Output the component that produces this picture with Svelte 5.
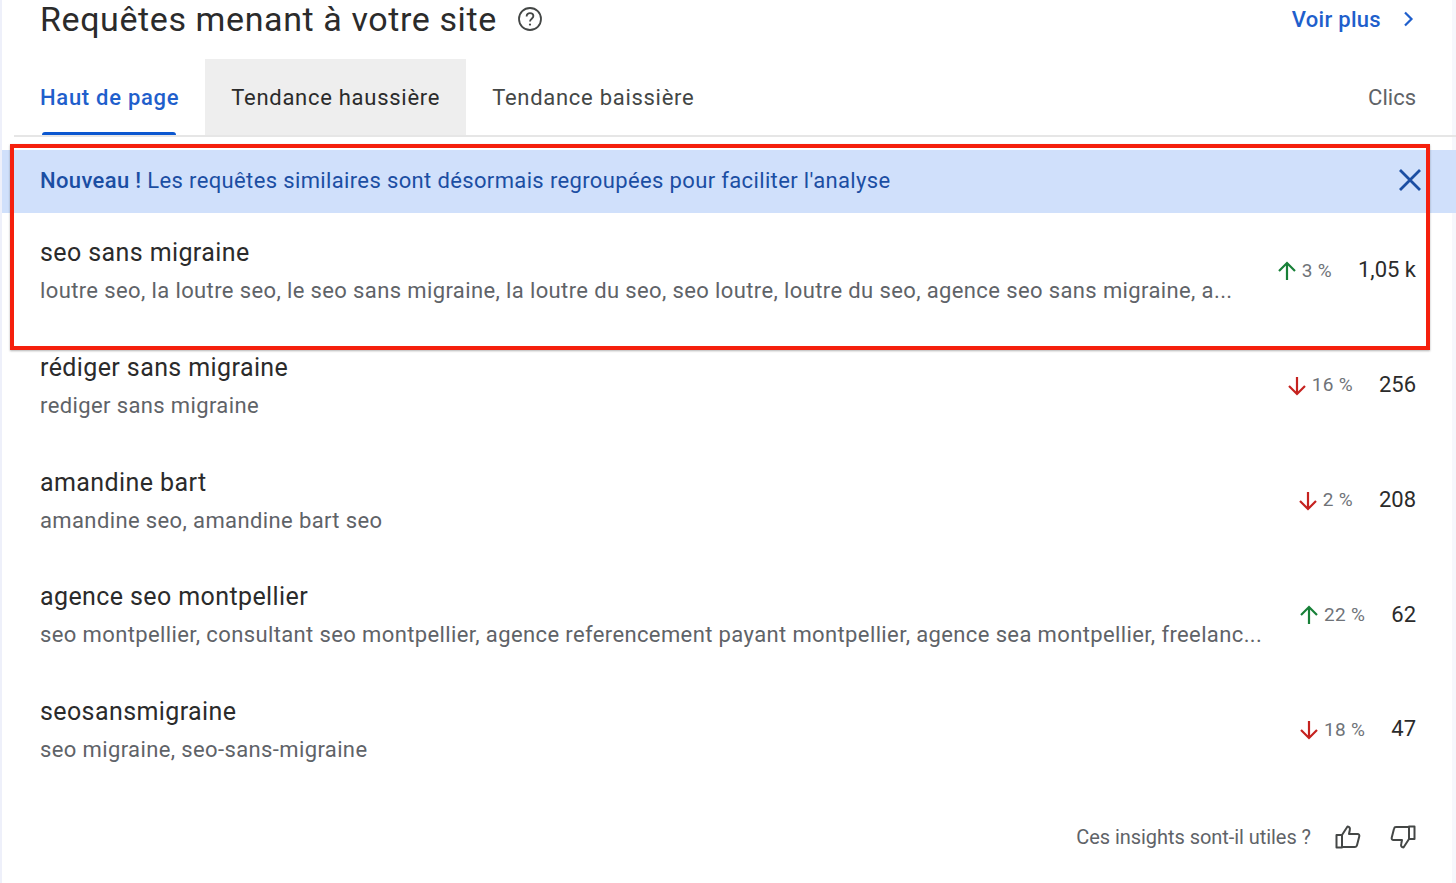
<script>
  const rows = [
    { title: "seo sans migraine", sub: "loutre seo, la loutre seo, le seo sans migraine, la loutre du seo, seo loutre, loutre du seo, agence seo sans migraine, a...", dir: "up", pct: "3 %", clicks: "1,05 k" },
    { title: "rédiger sans migraine", sub: "rediger sans migraine", dir: "down", pct: "16 %", clicks: "256" },
    { title: "amandine bart", sub: "amandine seo, amandine bart seo", dir: "down", pct: "2 %", clicks: "208" },
    { title: "agence seo montpellier", sub: "seo montpellier, consultant seo montpellier, agence referencement payant montpellier, agence sea montpellier, freelanc...", dir: "up", pct: "22 %", clicks: "62" },
    { title: "seosansmigraine", sub: "seo migraine, seo-sans-migraine", dir: "down", pct: "18 %", clicks: "47" },
  ]
</script>

<div class="card">
  <header class="head">
    <div class="head-left">
      <h1>Requêtes menant à votre site</h1>
      <svg class="help" viewBox="0 0 26 26" width="26" height="26" fill="none" stroke="#444746">
        <circle cx="13" cy="13" r="11" stroke-width="1.8" />
        <path d="M9.6 10.4c0-2 1.5-3.3 3.4-3.3s3.4 1.2 3.4 3c0 2.500-3.400 2.700-3.400 5.400" stroke-width="1.8" />
        <circle cx="13" cy="18.600" r="1.100" fill="#444746" stroke="none" />
      </svg>
    </div>
    <a class="more" href="#more">
      Voir plus
      <svg viewBox="0 0 12 16" width="12" height="16" fill="none" stroke="#1f5fcc" stroke-width="2.200"><path d="M2 1.500l6.500 6.500L2 14.500" /></svg>
    </a>
  </header>

  <nav class="tabs">
    <span class="tab active">Haut de page</span>
    <span class="tab hover">Tendance haussière</span>
    <span class="tab">Tendance baissière</span>
    <span class="metric">Clics</span>
  </nav>

  <div class="banner">
    <p><b>Nouveau !</b> Les requêtes similaires sont désormais regroupées pour faciliter l'analyse</p>
    <svg viewBox="0 0 24 24" width="24" height="24" fill="none" stroke="#1b4ea3" stroke-width="2.800"><path d="M2 2l20 20M22 2L2 22" /></svg>
  </div>

  <ul class="rows">
    {#each rows as row}
      <li class="row">
        <div class="text">
          <div class="title">{row.title}</div>
          <div class="sub">{row.sub}</div>
        </div>
        <div class="trend">
          <svg class={row.dir} viewBox="0 0 20 20" width="20" height="20" fill="none" stroke="currentColor" stroke-width="2.200">
            {#if row.dir === "up"}
              <path d="M10 19V2M2 10l8-8 8 8" />
            {:else}
              <path d="M10 1v17M2 10l8 8 8-8" />
            {/if}
          </svg>
          <span class="pct">{row.pct}</span>
        </div>
        <div class="clicks">{row.clicks}</div>
      </li>
    {/each}
  </ul>

  <footer class="foot">
    <span>Ces insights sont-il utiles ?</span>
    <svg viewBox="0 0 26 24" width="26" height="24" fill="none" stroke="#444746" stroke-width="2" stroke-linejoin="round">
      <path d="M1.500 10h5.500v12.500H1.500zM7 10l5.500-8.500c2 .3 2.800 1.600 2.300 3.500l-.8 4h8.500c1.300 0 2.100 1.100 1.800 2.300l-2.300 9c-.2.900-1 1.700-2 1.700H7" />
    </svg>
    <svg class="down-thumb" viewBox="0 0 26 24" width="26" height="24" fill="none" stroke="#444746" stroke-width="2" stroke-linejoin="round">
      <path d="M24.500 14H19V1.500h5.500zM19 14l-5.500 8.500c-2-.3-2.800-1.600-2.300-3.500l.8-4H3.500c-1.300 0-2.100-1.100-1.800-2.300l2.300-9c.2-.9 1-1.700 2-1.700H19" />
    </svg>
  </footer>

  <div class="highlight"></div>
</div>

<style>
  :global(body) {
    background: #fff;
  }

  .card {
    position: relative;
    box-sizing: border-box;
    width: 1456px;
    height: 883px;
    overflow: hidden;
    font-family: Roboto, "Liberation Sans", sans-serif;
    color: #1f1f1f;
    background: #fff;
    border-left: 2px solid #eef0fa;
    box-shadow: inset -4px 0 0 #f6f7fc;
  }

  .head {
    display: flex;
    justify-content: space-between;
    align-items: center;
    height: 38px;
    padding: 0 41px 0 38px;
  }

  .head-left {
    display: flex;
    align-items: center;
    gap: 20px;
  }

  h1 {
    margin: 0;
    font-size: 34px;
    font-weight: 400;
    line-height: 38px;
    letter-spacing: 0.6px;
    color: #2b2b2b;
  }

  .more {
    display: flex;
    align-items: center;
    gap: 22px;
    color: #1f5fcc;
    font-size: 22px;
    font-weight: 500;
    letter-spacing: 0.3px;
    text-decoration: none;
  }

  .tabs {
    display: flex;
    align-items: stretch;
    height: 76px;
    margin: 21px 0 0 12px;
    border-bottom: 2px solid #e6e6e6;
    font-size: 22px;
    color: #444746;
  }

  .tab {
    display: flex;
    align-items: center;
    padding: 0 26px;
    letter-spacing: 0.72px;
  }

  .tab.active {
    position: relative;
    color: #1f5fcc;
    font-weight: 500;
  }

  .tab.active::after {
    content: "";
    position: absolute;
    left: 28px;
    right: 29px;
    bottom: 0;
    height: 3px;
    border-radius: 3px 3px 0 0;
    background: #0b57d0;
  }

  .tab.hover {
    background: #eeeeee;
    color: #2b2b2b;
  }

  .metric {
    display: flex;
    align-items: center;
    margin-left: auto;
    padding-right: 40px;
    color: #5f6368;
  }

  .banner {
    display: flex;
    justify-content: space-between;
    align-items: center;
    box-sizing: border-box;
    height: 63px;
    margin-top: 13px;
    padding: 0 34px 3px 38px;
    background: #d0e0fb;
    color: #1b4ea3;
    font-size: 22px;
    letter-spacing: 0.36px;
  }

  .banner p {
    margin: 0;
  }

  .banner b {
    font-weight: 500;
  }

  .rows {
    margin: 0;
    padding: 0;
    list-style: none;
  }

  .row {
    display: flex;
    align-items: flex-start;
    height: 114.750px;
    padding: 0 40px 0 38px;
  }

  .text {
    flex: 1;
    min-width: 0;
    padding-top: 23px;
  }

  .title {
    font-size: 25px;
    line-height: 34px;
    letter-spacing: 0.4px;
    color: #2b2b2b;
  }

  .sub {
    margin-top: 4px;
    font-size: 22px;
    line-height: 34px;
    letter-spacing: 0.38px;
    color: #5f6368;
    white-space: nowrap;
  }

  .trend {
    display: flex;
    align-items: center;
    gap: 5px;
    margin-top: 45.600px;
    color: #6f7378;
    font-size: 19px;
    letter-spacing: 0.3px;
  }

  .pct {
    margin-bottom: 2px;
  }

  .trend .up {
    color: #188038;
  }

  .trend .down {
    color: #c5221f;
  }

  .clicks {
    margin-top: 42.400px;
    margin-left: 26px;
    text-align: right;
    font-size: 22px;
    line-height: 30px;
    color: #2b2b2b;
  }

  .foot {
    position: absolute;
    right: 40px;
    bottom: 34px;
    display: flex;
    align-items: center;
    gap: 24px;
    font-size: 20px;
    letter-spacing: -0.05px;
    color: #5f6368;
  }

  .down-thumb {
    margin-left: 5px;
  }

  .highlight {
    position: absolute;
    left: 8px;
    top: 144px;
    width: 1412px;
    height: 198px;
    border: 4px solid #f5200d;
    box-shadow: 0 1px 2px rgba(0, 0, 0, 0.3);
  }
</style>
